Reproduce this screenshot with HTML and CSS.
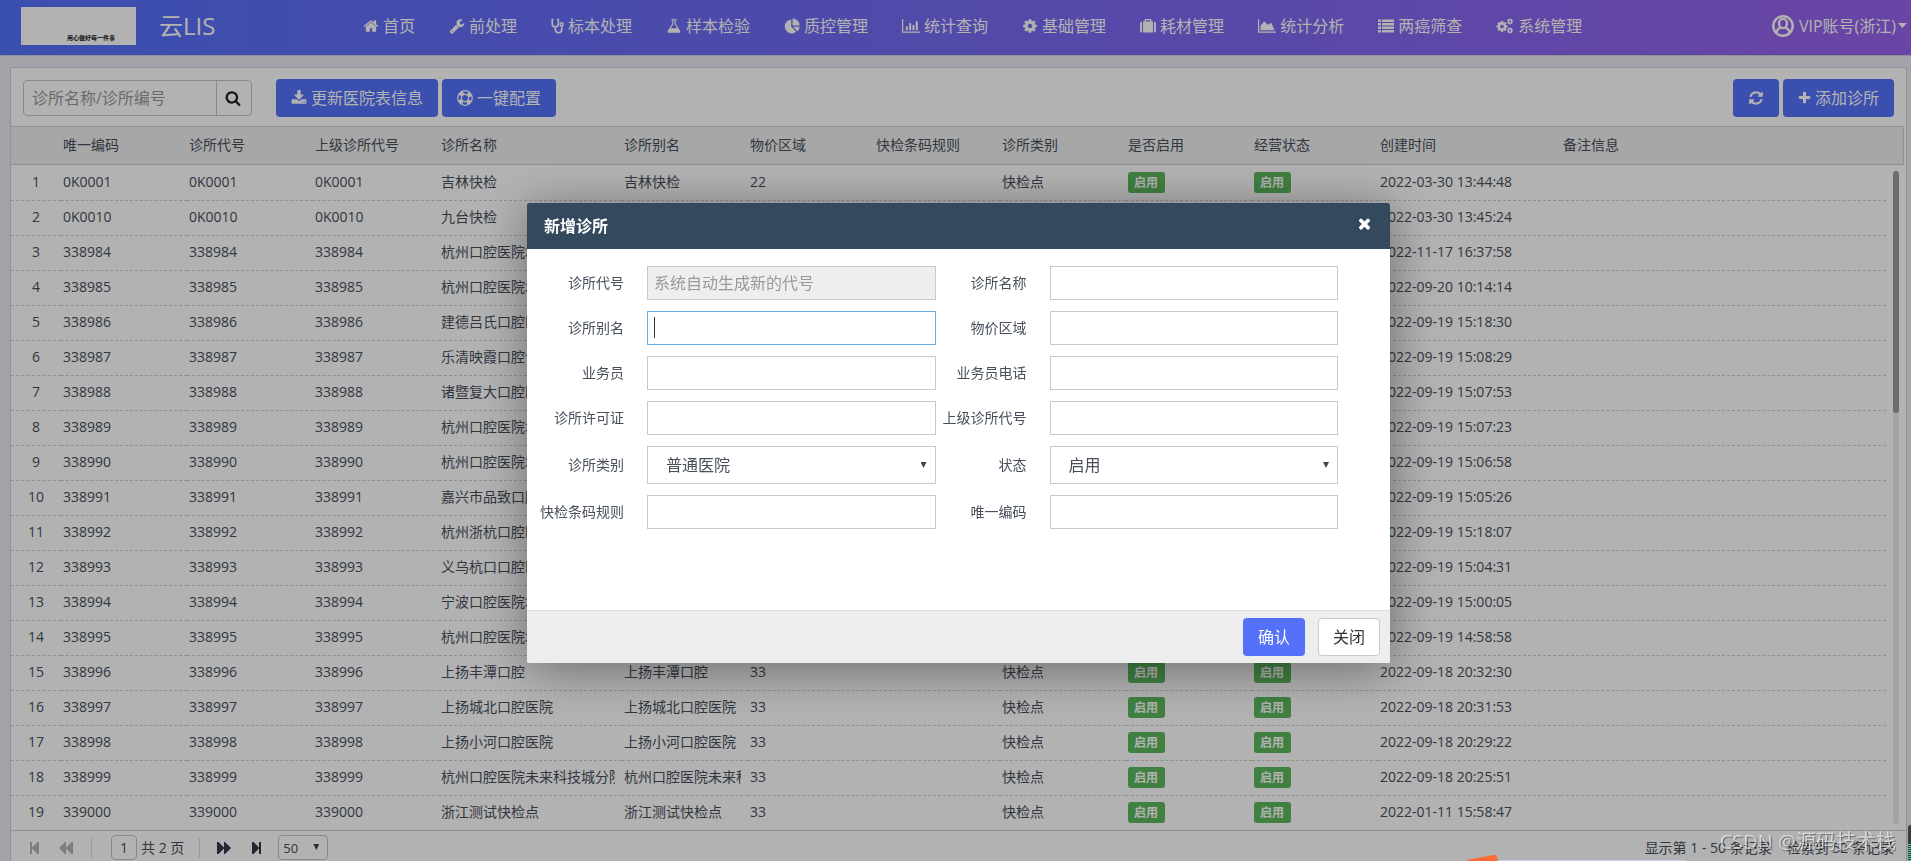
FILE: index.html
```html
<!DOCTYPE html>
<html lang="zh-CN">
<head>
<meta charset="utf-8">
<title>云LIS</title>
<link rel="stylesheet" href="styles.css">
</head>
<body>
<svg class="sprite" aria-hidden="true">
  <symbol id="home" viewBox="0 0 1792 1792"><path d="M1472 992v480q0 26-19 45t-45 19h-384v-384h-256v384h-384q-26 0-45-19t-19-45v-480q0-1 .5-3t.5-3l575-474 575 474q1 2 1 6zm223-69l-62 74q-8 9-21 11h-3q-13 0-21-7l-692-577-692 577q-12 8-24 7-13-2-21-11l-62-74q-8-10-7-23.5t11-21.5l719-599q32-26 76-26t76 26l244 204v-195q0-14 9-23t23-9h192q14 0 23 9t9 23v408l219 182q10 8 11 21.5t-7 23.5z"/></symbol>
  <symbol id="wrench" viewBox="0 0 1792 1792"><path d="M448 1472q0-26-19-45t-45-19-45 19-19 45 19 45 45 19 45-19 19-45zm644-420l-682 682q-37 37-90 37-52 0-91-37l-106-108q-38-36-38-90 0-53 38-91l681-681q39 98 114.5 173.5t173.5 114.5zm634-435q0 39-23 106-47 134-164.5 217.5t-258.5 83.5q-185 0-316.5-131.5t-131.5-316.5 131.5-316.5 316.5-131.5q58 0 121.5 16.5t107.5 46.5q16 11 16 28t-16 28l-293 169v224l193 107q5-3 79-48.5t135.5-81 70.5-35.5q15 0 23.5 10t8.5 25z"/></symbol>
  <symbol id="steth" viewBox="0 0 13 16"><path d="M2.6 1.6H1.2v4.2a3.1 3.1 0 0 0 6.2 0V1.6H6M4.3 9v2.6a3.2 3.2 0 0 0 6.4 0V7.6" fill="none" stroke="currentColor" stroke-width="1.6"/><circle cx="10.7" cy="6.2" r="1.5" fill="none" stroke="currentColor" stroke-width="1.4"/></symbol>
  <symbol id="flask" viewBox="0 0 1792 1792"><path d="M1591 1448q56 89 21.5 152.5t-140.5 63.5h-1152q-106 0-140.5-63.5t21.5-152.5l503-793v-399h-64q-26 0-45-19t-19-45 19-45 45-19h512q26 0 45 19t19 45-19 45-45 19h-64v399zm-779-725l-272 429h712l-272-429-20-31v-436h-128v436z"/></symbol>
  <symbol id="pie" viewBox="0 0 16 16"><path d="M7.2 1.4v7.4l5 5A7 7 0 1 1 7.2 1.4zM8.6.4a7 7 0 0 1 7 7h-7zM8.9 8.8h6.7a7 7 0 0 1-2 4.7z"/></symbol>
  <symbol id="bars" viewBox="0 0 19 16"><path d="M0 1h1.3v12.7H19V15H0zM4 8.5h2.2v4H4zM7.5 5h2.2v7.5H7.5zM11 7h2.2v5.500H11zM14.500 3h2.200v9.500h-2.200z"/></symbol>
  <symbol id="cog" viewBox="0 0 1792 1792"><path d="M1152 896q0-106-75-181t-181-75-181 75-75 181 75 181 181 75 181-75 75-181zm512-109v222q0 12-8 23t-20 13l-185 28q-19 54-39 91 35 50 107 138 10 12 10 25t-9 23q-27 37-99 108t-94 71q-12 0-26-9l-138-108q-44 23-91 38-16 136-29 186-7 28-36 28h-222q-14 0-24.5-8.5t-11.5-21.5l-28-184q-49-16-90-37l-141 107q-10 9-25 9-14 0-25-11-126-114-165-168-7-10-7-23 0-12 8-23 15-21 51-66.5t54-70.5q-27-50-41-99l-183-27q-13-2-21-12.5t-8-23.5v-222q0-12 8-23t19-13l186-28q14-46 39-92-40-57-107-138-10-12-10-24 0-10 9-23 26-36 98.5-107.5t94.5-71.5q13 0 26 10l138 107q44-23 91-38 16-136 29-186 7-28 36-28h222q14 0 24.5 8.5t11.5 21.5l28 184q49 16 90 37l142-107q9-9 24-9 13 0 25 10 129 119 165 170 7 8 7 22 0 12-8 23-15 21-51 66.500t-54 70.500q26 50 41 98l183 28q13 2 21 12.500t8 23.500z"/></symbol>
  <symbol id="case" viewBox="0 0 16 16"><path d="M0 5.500Q0 3.500 2 3.500V14.500Q0 14.500 0 12.500zM3 3.500h1.600V1.800Q4.600 1 5.400 1h5.200q.8 0 .8.8v1.700H13v11H3zM5.900 2.300v1.200h4.200V2.300zM14 3.500q2 0 2 2v7q0 2-2 2z"/></symbol>
  <symbol id="area" viewBox="0 0 19 16"><path d="M0 1h1.300v12.700H19V15H0zM2.600 12.500V8L6.500 3l4 3.800L14 4.500l3.500 8z"/></symbol>
  <symbol id="list" viewBox="0 0 16 16"><path d="M0 1.500h3v2.600H0zM4 1.500h12v2.600H4zM0 5h3v2.600H0zM4 5h12v2.600H4zM0 8.500h3v2.600H0zM4 8.500h12v2.600H4zM0 12h3v2.600H0zM4 12h12v2.600H4z"/></symbol>
  <symbol id="cogs" viewBox="0 0 17 16"><use href="#cog" x="-1" y="2" width="13" height="13"/><use href="#cog" x="10" y="0" width="7" height="7"/><use href="#cog" x="10" y="9" width="7" height="7"/></symbol>
  <symbol id="search" viewBox="0 0 1792 1792"><path d="M1216 832q0-185-131.500-316.500t-316.500-131.500-316.500 131.500-131.500 316.500 131.500 316.500 316.500 131.500 316.500-131.500 131.500-316.500zm512 832q0 52-38 90t-90 38q-54 0-90-38l-343-342q-179 124-399 124-143 0-273.500-55.500t-225-150-150-225-55.500-273.500 55.500-273.500 150-225 225-150 273.500-55.500 273.500 55.500 225 150 150 225 55.500 273.500q0 220-124 399l343 343q37 37 37 90z"/></symbol>
  <symbol id="download" viewBox="0 0 1792 1792"><path d="M1344 1344q0-26-19-45t-45-19-45 19-19 45 19 45 45 19 45-19 19-45zm256 0q0-26-19-45t-45-19-45 19-19 45 19 45 45 19 45-19 19-45zm128-224v320q0 40-28 68t-68 28h-1472q-40 0-68-28t-28-68v-320q0-40 28-68t68-28h465l135 136q58 56 136 56t136-56l136-136h464q40 0 68 28t28 68zm-325-569q17 41-14 70l-448 448q-18 19-45 19t-45-19l-448-448q-31-29-14-70 17-39 59-39h256v-448q0-26 19-45t45-19h256q26 0 45 19t19 45v448h256q42 0 59 39z"/></symbol>
  <symbol id="ring" viewBox="0 0 16 16"><g fill="none" stroke="currentColor"><circle cx="8" cy="8" r="7.300" stroke-width="1.200"/><circle cx="8" cy="8" r="3.600" stroke-width="1.200"/><circle cx="8" cy="8" r="5.500" stroke-width="3.600" stroke-dasharray="4.320 4.320" stroke-dashoffset="-2.160"/></g></symbol>
  <symbol id="refresh" viewBox="0 0 1792 1792"><path d="M1639 1056q0 5-1 7-64 268-268 434.500t-478 166.500q-146 0-282.500-55t-243.500-157l-129 129q-19 19-45 19t-45-19-19-45v-448q0-26 19-45t45-19h448q26 0 45 19t19 45-19 45l-137 137q71 66 161 102t187 36q134 0 250-65t186-179q11-17 53-117 8-23 30-23h192q13 0 22.500 9.500t9.500 22.500zm25-800v448q0 26-19 45t-45 19h-448q-26 0-45-19t-19-45 19-45l138-138q-148-137-349-137-134 0-250 65t-186 179q-11 17-53 117-8 23-30 23h-199q-13 0-22.500-9.500t-9.500-22.500v-7q65-268 270-434.500t480-166.500q146 0 284 55.500t245 156.500l130-129q19-19 45-19t45 19 19 45z"/></symbol>
  <symbol id="plus" viewBox="96 96 1600 1600"><path d="M1600 736v192q0 40-28 68t-68 28h-416v416q0 40-28 68t-68 28h-192q-40 0-68-28t-28-68v-416h-416q-40 0-68-28t-28-68v-192q0-40 28-68t68-28h416v-416q0-40 28-68t68-28h192q40 0 68 28t28 68v416h416q40 0 68 28t28 68z"/></symbol>
  <symbol id="times" viewBox="0 0 1792 1792"><path d="M1490 1322q0 40-28 68l-136 136q-28 28-68 28t-68-28l-294-294-294 294q-28 28-68 28t-68-28l-136-136q-28-28-28-68t28-68l294-294-294-294q-28-28-28-68t28-68l136-136q28-28 68-28t68 28l294 294 294-294q28-28 68-28t68 28l136 136q28 28 28 68t-28 68l-294 294 294 294q28 28 28 68z"/></symbol>
  <symbol id="user" viewBox="0 0 22 22"><g fill="none" stroke="currentColor" stroke-width="2.400"><circle cx="11" cy="11" r="9.700"/><ellipse cx="11" cy="8.500" rx="4" ry="4.600"/><path d="M4 17.500q1.500-4 5-4.800M18 17.500q-1.500-4-5-4.800"/></g></symbol>
  <symbol id="first" viewBox="0 0 14 14"><path d="M2 1h2v5.500L9.500 1H11v12H9.500L4 7.500V13H2z"/></symbol>
  <symbol id="prev" viewBox="0 0 14 14"><path d="M0 7l6-6h1v5.500L12.500 1H14v12h-1.500L7 7.500V13H6z"/></symbol>
</svg>

<div class="app">
  <header class="topbar">
    <div class="logo">用心做好每一件事</div>
    <h1 class="brand">云LIS</h1>
    <nav class="nav">
      <a href="#"><svg class="ic"><use href="#home"/></svg>首页</a>
      <a href="#"><svg class="ic"><use href="#wrench"/></svg>前处理</a>
      <a href="#"><svg class="ic narrow"><use href="#steth"/></svg>标本处理</a>
      <a href="#"><svg class="ic"><use href="#flask"/></svg>样本检验</a>
      <a href="#"><svg class="ic"><use href="#pie"/></svg>质控管理</a>
      <a href="#"><svg class="ic wide"><use href="#bars"/></svg>统计查询</a>
      <a href="#"><svg class="ic"><use href="#cog"/></svg>基础管理</a>
      <a href="#"><svg class="ic"><use href="#case"/></svg>耗材管理</a>
      <a href="#"><svg class="ic wide"><use href="#area"/></svg>统计分析</a>
      <a href="#"><svg class="ic"><use href="#list"/></svg>两癌筛查</a>
      <a href="#"><svg class="ic wide"><use href="#cogs"/></svg>系统管理</a>
    </nav>
    <a class="account" href="#"><svg class="avatar"><use href="#user"/></svg>VIP账号(浙江)<i class="caret"></i></a>
  </header>

  <main class="panel">
    <div class="toolbar">
      <form class="search">
        <input type="text" placeholder="诊所名称/诊所编号" aria-label="诊所名称/诊所编号">
        <button type="button" aria-label="搜索"><svg class="ic"><use href="#search"/></svg></button>
      </form>
      <button type="button" class="btn"><svg class="ic"><use href="#download"/></svg>更新医院表信息</button>
      <button type="button" class="btn"><svg class="ic"><use href="#ring"/></svg>一键配置</button>
      <span class="spacer"></span>
      <button type="button" class="btn" aria-label="刷新"><svg class="ic"><use href="#refresh"/></svg></button>
      <button type="button" class="btn"><svg class="ic narrow"><use href="#plus"/></svg>添加诊所</button>
    </div>

    <div class="grid">
      <table>
        <colgroup>
          <col class="c-index"><col><col><col><col class="c-long"><col><col><col><col><col><col><col class="c-long"><col class="c-note"><col class="c-gutter">
        </colgroup>
        <thead>
          <tr><th></th><th>唯一编码</th><th>诊所代号</th><th>上级诊所代号</th><th>诊所名称</th><th>诊所别名</th><th>物价区域</th><th>快检条码规则</th><th>诊所类别</th><th>是否启用</th><th>经营状态</th><th>创建时间</th><th>备注信息</th><th></th></tr>
        </thead>
        <tbody id="rows"></tbody>
      </table>
      <div class="track"><div class="thumb"></div></div>
    </div>

    <footer class="pager">
      <button type="button" disabled aria-label="第一页"><svg><use href="#first"/></svg></button>
      <button type="button" disabled aria-label="上一页"><svg><use href="#prev"/></svg></button>
      <i class="sep"></i>
      <label class="page"><input type="text" value="1" aria-label="页码">共 2 页</label>
      <i class="sep"></i>
      <button type="button" class="flip" aria-label="下一页"><svg><use href="#prev"/></svg></button>
      <button type="button" class="flip" aria-label="最后一页"><svg><use href="#first"/></svg></button>
      <span class="pick size"><select aria-label="每页条数"><option>50</option></select></span>
      <span class="spacer"></span>
      <span class="info">显示第 1 - 50 条记录</span>
      <span class="info">检索到 52 条记录</span>
    </footer>
  </main>
</div>

<div class="backdrop">
  <section class="modal" role="dialog" aria-labelledby="dlg">
    <header class="modal-head">
      <h2 id="dlg">新增诊所</h2>
      <button type="button" aria-label="关闭窗口"><svg><use href="#times"/></svg></button>
    </header>
    <form class="fields">
      <label for="f1">诊所代号</label><input id="f1" type="text" placeholder="系统自动生成新的代号" disabled>
      <label for="f2">诊所名称</label><input id="f2" type="text">
      <label for="f3">诊所别名</label><span class="focused"><input id="f3" type="text"></span>
      <label for="f4">物价区域</label><input id="f4" type="text">
      <label for="f5">业务员</label><input id="f5" type="text">
      <label for="f6">业务员电话</label><input id="f6" type="text">
      <label for="f7">诊所许可证</label><input id="f7" type="text">
      <label for="f8">上级诊所代号</label><input id="f8" type="text">
      <label for="f9">诊所类别</label><span class="pick"><select id="f9"><option>普通医院</option></select></span>
      <label for="f10">状态</label><span class="pick"><select id="f10"><option>启用</option></select></span>
      <label for="f11">快检条码规则</label><input id="f11" type="text">
      <label for="f12">唯一编码</label><input id="f12" type="text">
    </form>
    <footer class="modal-foot">
      <button type="button" class="btn">确认</button>
      <button type="button" class="btn plain">关闭</button>
    </footer>
  </section>
</div>

<div class="sticker"><i class="tab"></i><i class="strip"></i></div>
<div class="meter"></div>
<div class="watermark">CSDN @源码技术栈</div>
<script src="app.js"></script>
</body>
</html>
```

FILE: styles.css
```css
* { box-sizing: border-box; }
body {
  margin: 0;
  font: 14px/20px "Open Sans", "Noto Sans CJK SC", sans-serif;
  color: #484f5b;
  background: #e9ebf2;
}
button, input, select { font: inherit; color: inherit; }
a { color: inherit; text-decoration: none; }
svg { fill: currentColor; display: block; flex: none; }
.sprite { position: absolute; width: 0; height: 0; }
.app { height: 100vh; display: flex; flex-direction: column; overflow: hidden; }
.spacer { flex: 1; }
.ic { width: 16px; height: 16px; }
.narrow { width: 13px; }
.wide { width: 18px; }

/* top bar */
.topbar {
  flex: none;
  height: 56px;
  display: flex;
  align-items: center;
  padding: 0 4px 4px 21px;
  color: #fff;
  font-size: 16px;
  white-space: nowrap;
  background: linear-gradient(90deg, #5471fa, #9763ec);
  border-bottom: 1px solid #ccd0dc;
}
.logo {
  width: 115px;
  height: 38px;
  padding: 25px 21px 0 0;
  font-size: 6px;
  line-height: 12px;
  font-weight: 700;
  text-align: right;
  color: #222;
  background: #fff;
}
.brand { width: 204px; margin: 0 0 0 23px; font-size: 24px; font-weight: 400; }
.nav { display: flex; gap: 34px; flex: 1; }
.nav a, .account { display: flex; align-items: center; gap: 4px; }
.account { gap: 2px; }
.avatar { width: 22px; height: 22px; margin-right: 3px; }
.caret { width: 9px; height: 5px; background: currentColor; clip-path: polygon(0 0, 100% 0, 50% 100%); }

/* panel and toolbar */
.panel {
  flex: 1;
  min-height: 0;
  display: flex;
  flex-direction: column;
  margin: 11px 4px 0 10px;
  background: #fff;
  border: 1px solid #d0d2d8;
  border-bottom: 0;
}
.toolbar {
  flex: none;
  display: flex;
  align-items: center;
  gap: 4px;
  padding: 11px 12px 9px;
}
.search {
  display: flex;
  width: 229px;
  height: 36px;
  margin-right: 20px;
  border: 1px solid #c4c4c4;
  border-radius: 4px;
}
.search input {
  flex: 1;
  min-width: 0;
  padding: 0 8px;
  border: 0;
  border-right: 1px solid #c4c4c4;
  background: none;
  font-size: 16px;
}
.search input::placeholder { color: #999; }
.search button { width: 34px; padding: 0 8px; border: 0; background: none; color: #222; }
.btn {
  display: flex;
  align-items: center;
  justify-content: center;
  gap: 4px;
  height: 38px;
  padding: 0 15px;
  border: 0;
  border-radius: 4px;
  background: #5571fa;
  color: #fff;
  font-size: 16px;
  white-space: nowrap;
}

/* data grid */
.grid { position: relative; flex: 1; min-height: 0; overflow: hidden; padding-right: 2px; }
table { width: 100%; table-layout: fixed; border-spacing: 0; }
col { width: 126px; }
.c-index { width: 50px; }
.c-long { width: 183px; }
.c-note { width: auto; }
.c-gutter { width: 18px; }
th, td { padding: 0 7px 2px 2px; text-align: left; white-space: nowrap; }
td > div { overflow: hidden; }
th {
  height: 39px;
  font-weight: 400;
  background: #efefef;
  border: solid #d0d0d0;
  border-width: 1px 0;
}
th:last-child { border-right-width: 1px; }
td { height: 35px; border-bottom: 1px dashed #cfcfcf; }
tr:first-child td { height: 36px; }
td:first-child { text-align: center; padding: 0 0 2px; }
td:last-child { border: 0; }
.badge {
  display: block;
  width: max-content;
  margin-top: 1px;
  padding: 0 7px 0 6px;
  border-radius: 3px;
  background: #5cb85c;
  color: #fff;
  font-size: 12px;
  line-height: 21px;
  font-weight: 700;
}
.track {
  position: absolute;
  top: 45px;
  bottom: 6px;
  right: 7px;
  width: 6px;
  border-radius: 3px;
  background: #ebebeb;
}
.thumb { height: 37%; border-radius: 3px; background: #9b9b9b; }

/* pager */
.pager {
  flex: none;
  height: 31px;
  display: flex;
  align-items: center;
  padding: 3px 12px 0 17px;
  border-top: 1px solid #d0d0d0;
}
.pager button { width: 20px; height: 20px; margin-right: 8px; padding: 3px 0; border: 0; background: none; color: #2f3a4a; }
.pager button:disabled { color: #b5b5b5; }
.pager button + button { margin-left: 3px; }
.pager svg { width: 14px; height: 14px; }
.pager .flip { transform: scaleX(-1); margin: 0 6px 0 6px; }
.sep { width: 1px; height: 20px; margin: 0 14px 0 4px; background: #dcdcdc; }
.page { display: flex; align-items: center; gap: 4px; margin-left: 5px; }
.page input { width: 26px; height: 25px; padding: 0; text-align: center; border: 1px solid #c4c4c4; border-radius: 4px; background: none; }
.page + .sep { margin: 0 5px 0 15px; }
.info + .info { margin-left: 15px; }

/* selects */
.pick { position: relative; display: block; }
.pick::after {
  content: "";
  position: absolute;
  right: 9px;
  top: 16px;
  width: 6px;
  height: 6px;
  background: #444;
  clip-path: polygon(0 0, 100% 0, 50% 100%);
  pointer-events: none;
}
.pick select { width: 100%; appearance: none; border: 1px solid #c9c9c9; border-radius: 0; background: none; }
.size { width: 50px; margin-left: 9px; font-size: 13px; }
.size::after { top: 9px; }
.size select { height: 25px; padding: 0 4px; border-color: #c4c4c4; border-radius: 4px; }

/* dialog */
.backdrop {
  position: fixed;
  inset: 0;
  display: grid;
  place-items: center;
  padding: 5px 0 0 6px;
  background: rgba(0, 0, 0, .3);
}
.modal {
  width: 863px;
  max-width: 90vw;
  border-radius: 2px;
  overflow: hidden;
  background: #fff;
  box-shadow: 1px 6px 50px rgba(0, 0, 0, .4);
}
.modal-head {
  display: flex;
  justify-content: space-between;
  align-items: center;
  height: 46px;
  padding: 0 17px;
  background: #34495e;
  color: #fff;
}
.modal-head h2 { margin: 0; font-size: 16px; font-weight: 700; }
.modal-head button { padding: 0 0 6px; border: 0; background: none; color: #fff; }
.modal-head svg { width: 17px; height: 17px; }
.fields {
  display: grid;
  grid-template-columns: 120px 1fr 114px 1fr;
  row-gap: 11px;
  align-items: center;
  padding: 17px 52px 81px 0;
}
.fields label { padding-right: 23px; text-align: right; white-space: nowrap; }
.fields input { width: 100%; height: 34px; padding: 0 6px; border: 1px solid #c9c9c9; background: #fff; font-size: 16px; display: block; }
.fields input:disabled { background: #eee; }
.fields input::placeholder { color: #999; }
.fields select { display: block; height: 38px; padding: 0 18px; font-size: 16px; }
.focused { position: relative; }
.focused input { border-color: #66afe9; }
.focused::after { content: ""; position: absolute; left: 7px; top: 6px; width: 1px; height: 21px; background: #333; }
.modal-foot {
  display: flex;
  justify-content: flex-end;
  gap: 13px;
  padding: 7px 10px;
  border-top: 1px solid #dcdcdc;
  background: #ededed;
}
.plain { border: 1px solid #c9c9c9; padding: 0 14px; background: #fff; color: #333; }

/* floating extras */
.sticker { position: fixed; right: 225px; bottom: 0; display: flex; align-items: flex-end; }
.tab { width: 31px; height: 6px; background: #ff6a35; clip-path: polygon(0 85%, 85% 0, 94% 0, 100% 100%, 0 100%); }
.strip { width: 188px; height: 1px; background: #c3cfe4; }
.meter {
  position: fixed;
  right: 0;
  bottom: 0;
  width: 3px;
  height: 36px;
  border-radius: 3px 0 0 0;
  background: linear-gradient(#3c3c3c 18px, transparent 18px), repeating-linear-gradient(#3c3c3c 0 1px, #3fc77a 1px 2px);
}
.watermark {
  position: fixed;
  right: 15px;
  bottom: 6px;
  font-size: 20px;
  line-height: 26px;
  color: rgba(255, 255, 255, .6);
  text-shadow: 1px 1px 1px rgba(0, 0, 0, .4);
}
```

FILE: app.js
```js
const clinics = [
  ["0K0001", "吉林快检", "22", "2022-03-30 13:44:48"],
  ["0K0010", "九台快检", "22", "2022-03-30 13:45:24"],
  ["338984", "杭州口腔医院城西分院", "33", "2022-11-17 16:37:58"],
  ["338985", "杭州口腔医院城北分院", "33", "2022-09-20 10:14:14"],
  ["338986", "建德吕氏口腔医院", "33", "2022-09-19 15:18:30"],
  ["338987", "乐清映霞口腔诊所", "33", "2022-09-19 15:08:29"],
  ["338988", "诸暨复大口腔医院", "33", "2022-09-19 15:07:53"],
  ["338989", "杭州口腔医院城东分院", "33", "2022-09-19 15:07:23"],
  ["338990", "杭州口腔医院城南分院", "33", "2022-09-19 15:06:58"],
  ["338991", "嘉兴市品致口腔医院", "33", "2022-09-19 15:05:26"],
  ["338992", "杭州浙杭口腔医院", "33", "2022-09-19 15:18:07"],
  ["338993", "义乌杭口口腔医院", "33", "2022-09-19 15:04:31"],
  ["338994", "宁波口腔医院城西分院", "33", "2022-09-19 15:00:05"],
  ["338995", "杭州口腔医院城中分院", "33", "2022-09-19 14:58:58"],
  ["338996", "上扬丰潭口腔", "33", "2022-09-18 20:32:30"],
  ["338997", "上扬城北口腔医院", "33", "2022-09-18 20:31:53"],
  ["338998", "上扬小河口腔医院", "33", "2022-09-18 20:29:22"],
  ["338999", "杭州口腔医院未来科技城分院", "33", "2022-09-18 20:25:51"],
  ["339000", "浙江测试快检点", "33", "2022-01-11 15:58:47"]
];
const badge = '<span class="badge">启用</span>';
document.getElementById("rows").innerHTML = clinics.map(([code, name, region, created], i) =>
  "<tr>" + [i + 1, code, code, code, name, name, region, "", "快检点", badge, badge, created, "", ""]
    .map(cell => `<td><div>${cell}</div></td>`).join("") + "</tr>").join("");
```
